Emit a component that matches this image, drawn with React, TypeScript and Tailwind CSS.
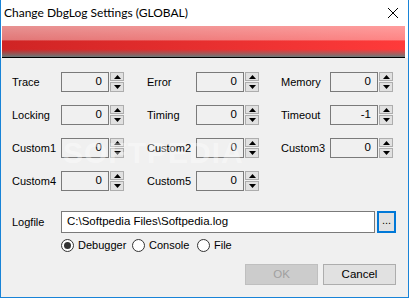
import React from "react";

const ui = "font-['Lato','Noto_Sans',sans-serif]";
const dlg = "font-['Liberation_Sans','DejaVu_Sans',sans-serif]";

const Arrow = ({ up }: { up?: boolean }) => (
  <svg width="7" height="4" viewBox="0 0 7 4">
    <path d={up ? "M0 4 L3.5 0 L7 4 Z" : "M0 0 L3.5 4 L7 0 Z"} fill="#000" />
  </svg>
);

const Spin = ({ label, value }: { label: string; value: string }) => (
  <div className="flex items-center h-[20px]">
    <span className={`w-[49px] text-[11px] text-black ${dlg}`}>{label}</span>
    <div
      className={`w-[48px] h-[20px] border border-[#7a7a7a] flex items-center justify-end pr-[6px] text-[11.5px] text-black ${dlg}`}
    >
      {value}
    </div>
    <div className="ml-[1px] w-[14px] h-[20px] flex flex-col gap-[1px]">
      <div className="h-[9px] bg-[#e1e1e1] border border-[#adadad] flex items-center justify-center">
        <Arrow up />
      </div>
      <div className="h-[10px] bg-[#e1e1e1] border border-[#adadad] flex items-center justify-center">
        <Arrow />
      </div>
    </div>
  </div>
);

const Radio = ({ label, checked }: { label: string; checked?: boolean }) => (
  <div className="flex items-center gap-[4px]">
    <div className="w-[13px] h-[13px] rounded-full border border-[#333] bg-white flex items-center justify-center">
      {checked && <div className="w-[7px] h-[7px] rounded-full bg-[#333]" />}
    </div>
    <span className={`text-[11px] text-black leading-none ${dlg}`}>{label}</span>
  </div>
);

export default function App() {
  return (
    <div className="w-[409px] h-[298px] bg-[#f0f0f0] border-x border-b border-[#1883d7] relative overflow-hidden flex flex-col">
      <div className="h-[26px] bg-white flex items-center justify-between pl-[3px] pr-[10px]">
        <span className={`text-[12px] text-black ${ui}`}>Change DbgLog Settings (GLOBAL)</span>
        <svg width="10" height="10" viewBox="0 0 10 10">
          <path d="M0 0 L10 10 M10 0 L0 10" stroke="#000" strokeWidth="1" />
        </svg>
      </div>
      <div className="bg-white pl-[1px] pr-[3px]">
        <div className="h-[31px] bg-[linear-gradient(to_bottom,rgba(255,255,255,0.5)_0%,rgba(255,255,255,0.38)_45%,rgba(255,255,255,0)_48%,rgba(255,255,255,0)_75%,rgba(100,125,125,0.95)_100%),linear-gradient(to_right,#cf2424,#ff3a3a)]" />
        <div className="h-[1px] bg-black" />
      </div>

      <div className="flex flex-col pl-[11px] pt-[14px] gap-[13px]">
        <div className="grid grid-cols-[135px_134px_auto]">
          <Spin label="Trace" value="0" />
          <Spin label="Error" value="0" />
          <Spin label="Memory" value="0" />
        </div>
        <div className="grid grid-cols-[135px_134px_auto]">
          <Spin label="Locking" value="0" />
          <Spin label="Timing" value="0" />
          <Spin label="Timeout" value="-1" />
        </div>
        <div className="grid grid-cols-[135px_134px_auto]">
          <Spin label="Custom1" value="0" />
          <Spin label="Custom2" value="0" />
          <Spin label="Custom3" value="0" />
        </div>
        <div className="grid grid-cols-[135px_134px_auto]">
          <Spin label="Custom4" value="0" />
          <Spin label="Custom5" value="0" />
        </div>
      </div>

      <div className="flex items-center pl-[11px] mt-[20px]">
        <span className={`w-[49px] text-[11px] text-black ${dlg}`}>Logfile</span>
        <div
          className={`w-[314px] h-[22px] bg-white border border-[#7a7a7a] flex items-center pl-[5px] text-[11.5px] text-black ${dlg}`}
        >
          C:\Softpedia Files\Softpedia.log
        </div>
        <div
          className={`ml-[2px] w-[19px] h-[22px] bg-[#e1e1e1] border-2 border-[#0078d7] flex items-center justify-center text-[11px] text-black leading-none pb-[3px] ${dlg}`}
        >
          ...
        </div>
      </div>

      <div className="flex items-center pl-[60px] mt-[6px]">
        <div className="w-[71px]">
          <Radio label="Debugger" checked />
        </div>
        <div className="w-[65px]">
          <Radio label="Console" />
        </div>
        <Radio label="File" />
      </div>

      <div className="flex justify-end pr-[12px] mt-[12px] gap-[5px]">
        <div
          className={`w-[73px] h-[21px] bg-[#cccccc] border border-[#bfbfbf] flex items-center justify-center text-[11.5px] text-[#a0a0a0] ${dlg}`}
        >
          OK
        </div>
        <div
          className={`w-[73px] h-[21px] bg-[#e1e1e1] border border-[#adadad] flex items-center justify-center text-[11.5px] text-black ${dlg}`}
        >
          Cancel
        </div>
      </div>

      <div className="absolute left-[62px] top-[130px] text-[30px] font-bold tracking-[1px] text-white/40 pointer-events-none font-['Liberation_Sans',sans-serif]">
        SOFTPEDIA
      </div>
    </div>
  );
}
